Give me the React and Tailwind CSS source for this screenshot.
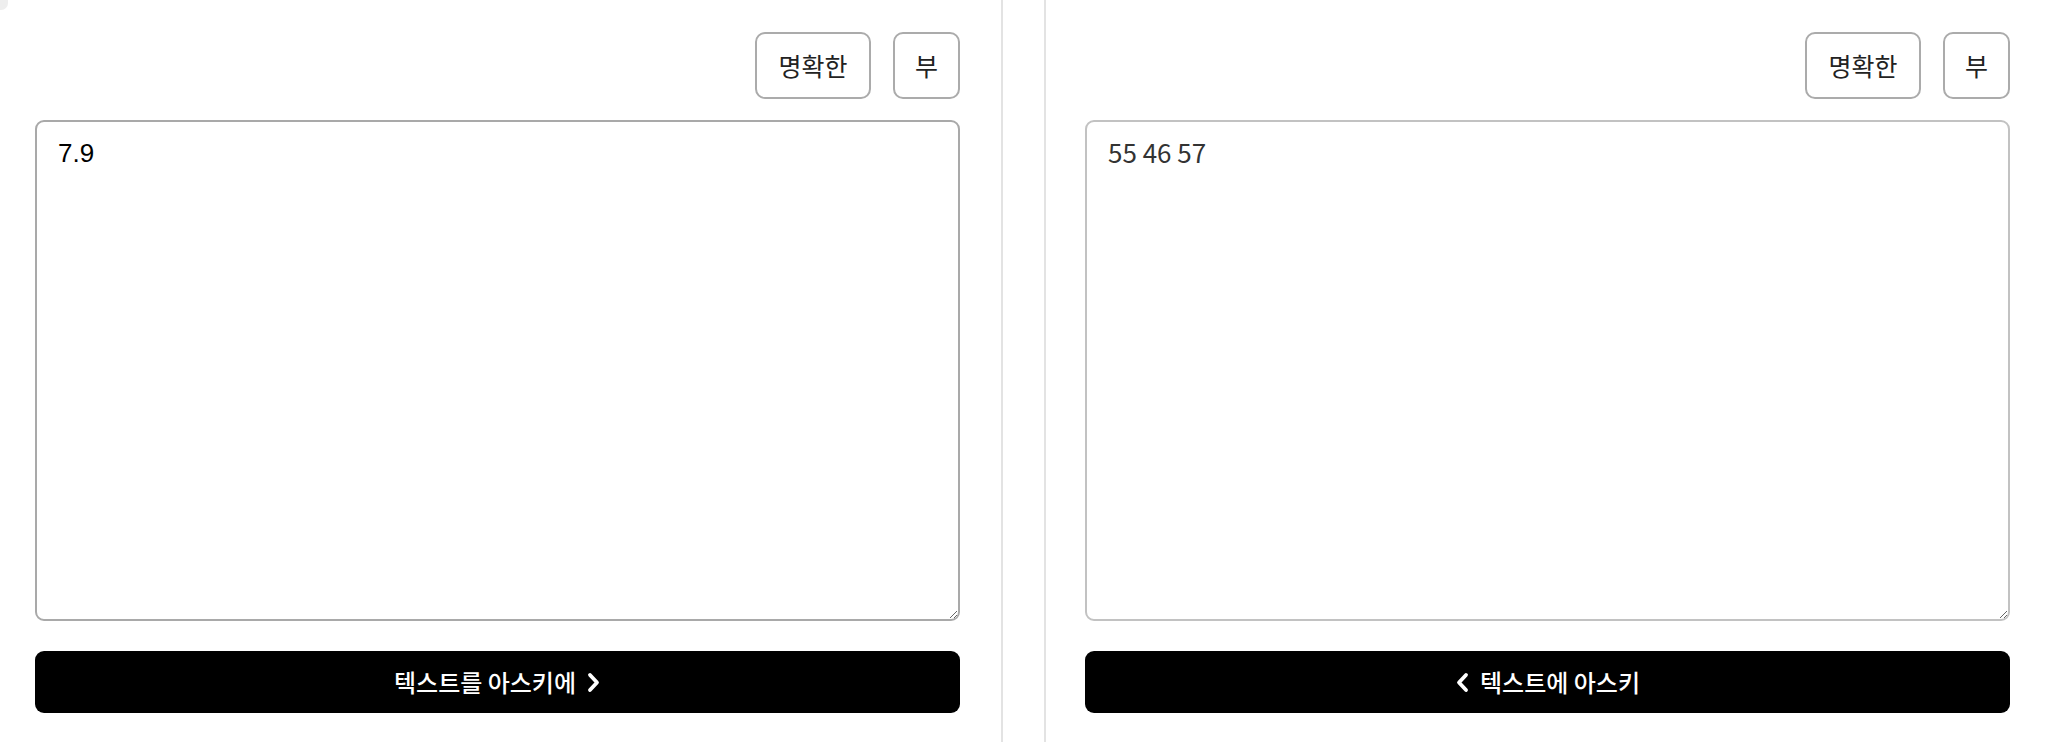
import React from "react";

const FONT = { fontFamily: '"Noto Sans CJK KR", "Noto Sans", sans-serif' };

function Chevron({ dir }) {
  return (
    <svg width="15" height="21" viewBox="0 0 15 21" fill="none" stroke="white" strokeWidth="3.8" strokeLinecap="round" strokeLinejoin="round">
      {dir === "right" ? <path d="M4 3 L11 10.5 L4 18" /> : <path d="M11 3 L4 10.5 L11 18" />}
    </svg>
  );
}

function Panel({ value, textFont, textClass, borderColor, action, dir }) {
  return (
    <div className="flex flex-col">
      <div className="flex justify-end gap-[22px] pt-[32px]">
        <button className="h-[67px] w-[116px] rounded-[10px] border-2 border-[#ababab] bg-white text-[25px] text-[#222]" style={FONT}>
          명확한
        </button>
        <button className="h-[67px] w-[67px] rounded-[10px] border-2 border-[#ababab] bg-white text-[25px] text-[#222]" style={FONT}>
          부
        </button>
      </div>
      <textarea
        defaultValue={value}
        className={`mt-[21px] h-[501px] w-full rounded-[9px] border-2 ${borderColor} ${textClass} bg-white px-[21px] pb-[10px] text-[26px] leading-[1.45] outline-none`}
        style={{ fontFamily: textFont }}
      />
      <button
        className="mt-[30px] flex h-[62px] w-full items-center justify-center gap-[10px] rounded-[9px] bg-black text-[24px] font-medium text-white"
        style={FONT}
      >
        {dir === "left" && <Chevron dir="left" />}
        <span>{action}</span>
        {dir === "right" && <Chevron dir="right" />}
      </button>
    </div>
  );
}

export default function App() {
  return (
    <div className="relative flex h-[742px] w-[2050px] overflow-hidden bg-white">
      <div className="absolute -left-[6px] -top-[6px] h-[16px] w-[14px] rounded-full bg-[#eeeeee]" />
      <div className="w-[1003px] shrink-0 border-r-2 border-[#e3e3e3] pl-[35px] pr-[41px]">
        <Panel
          value="7.9"
          textFont='"Liberation Sans", Arial, sans-serif'
          textClass="text-black pt-[13px]"
          borderColor="border-[#a9a9a9]"
          action="텍스트를 아스키에"
          dir="right"
        />
      </div>
      <div className="w-[41px] shrink-0" />
      <div className="w-[1006px] shrink-0 border-l-2 border-[#e3e3e3] pl-[39px] pr-[40px]">
        <Panel
          value="55 46 57"
          textFont='"Noto Sans CJK KR", sans-serif'
          textClass="text-[#333] pt-[11px]"
          borderColor="border-[#c2c2c2]"
          action="텍스트에 아스키"
          dir="left"
        />
      </div>
    </div>
  );
}
